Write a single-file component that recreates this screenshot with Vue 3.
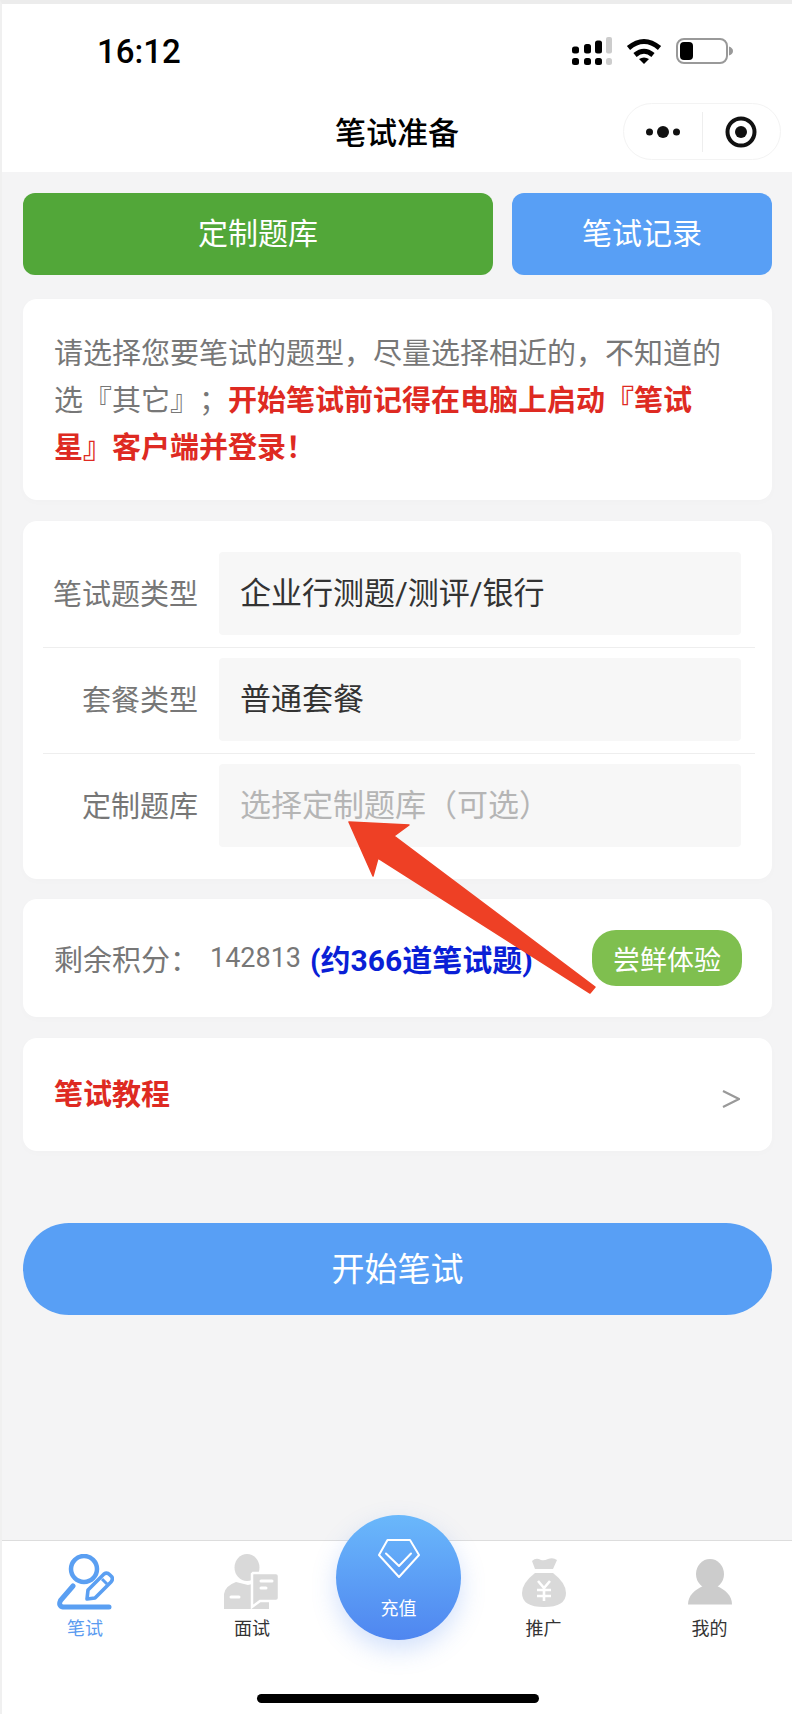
<script setup>
const fields = [
  { label: "笔试题类型", value: "企业行测题/测评/银行" },
  { label: "套餐类型", value: "普通套餐" },
  { label: "定制题库", value: "选择定制题库（可选）", placeholder: true }
];
</script>

<template>
  <div class="page">
    <header class="top">
      <div class="status">
        <span class="time">16:12</span>
        <div class="status-icons">
          <svg width="40" height="28" viewBox="0 0 40 28">
            <rect x="0" y="9.5" width="7" height="7" rx="2.5" fill="#000" />
            <rect x="12" y="7" width="7" height="9.5" rx="2.5" fill="#000" />
            <rect x="23" y="3.5" width="7" height="13" rx="2.5" fill="#000" />
            <rect x="34" y="0" width="6" height="16.5" rx="2" fill="#ccc" />
            <rect x="0" y="21" width="7" height="7" rx="2.5" fill="#000" />
            <rect x="12" y="21" width="7" height="7" rx="2.5" fill="#000" />
            <rect x="23" y="21" width="7" height="7" rx="2.5" fill="#000" />
            <rect x="34" y="21" width="6" height="7" rx="2.5" fill="#ccc" />
          </svg>
          <svg width="36" height="26" viewBox="0 0 36 26">
            <path d="M2.5 10 Q18 -3 33.5 10" fill="none" stroke="#000" stroke-width="5" />
            <path d="M9 17 Q18 9.5 27 17" fill="none" stroke="#000" stroke-width="5" />
            <path d="M13 21 L18 26 L23 21 Q18 18 13 21 Z" fill="#000" />
          </svg>
          <svg width="57" height="26" viewBox="0 0 57 26">
            <rect x="1" y="1" width="50" height="24" rx="7" fill="#fff" stroke="#999" stroke-width="2" />
            <rect x="4" y="4" width="13" height="18" rx="4" fill="#000" />
            <path d="M53 8.5 Q57 10 57 13 Q57 16 53 17.5 Z" fill="#999" />
          </svg>
        </div>
      </div>
      <div class="nav">
        <h1 class="title">笔试准备</h1>
        <div class="capsule">
          <div class="capsule-part">
            <svg width="34" height="14" viewBox="0 0 34 14">
              <circle cx="3.5" cy="7" r="3.5" fill="#111" />
              <circle cx="17" cy="7" r="6" fill="#111" />
              <circle cx="30.5" cy="7" r="3.5" fill="#111" />
            </svg>
          </div>
          <div class="capsule-line"></div>
          <div class="capsule-part">
            <svg width="32" height="32" viewBox="0 0 32 32">
              <circle cx="16" cy="16" r="13.5" fill="none" stroke="#111" stroke-width="4" />
              <circle cx="16" cy="16" r="6" fill="#111" />
            </svg>
          </div>
        </div>
      </div>
    </header>

    <main class="content">
      <div class="top-btns">
        <button class="btn green">定制题库</button>
        <button class="btn blue">笔试记录</button>
      </div>

      <section class="card notice">
        请选择您要笔试的题型，尽量选择相近的，不知道的选『其它』；<b class="red">开始笔试前记得在电脑上启动『笔试星』客户端并登录！</b>
      </section>

      <section class="card form">
        <div v-for="f in fields" :key="f.label" class="row">
          <label class="row-label">{{ f.label }}</label>
          <div class="input" :class="{ placeholder: f.placeholder }">{{ f.value }}</div>
        </div>
      </section>

      <section class="card points">
        <span class="points-label">剩余积分：</span>
        <span class="points-num">142813</span>
        <b class="points-blue">(约366道笔试题)</b>
        <button class="pill">尝鲜体验</button>
      </section>

      <section class="card guide">
        <b class="red guide-text">笔试教程</b>
        <svg width="18" height="18" viewBox="0 0 18 18">
          <path d="M1 1 L17 9 L1 17" fill="none" stroke="#999" stroke-width="2.2" />
        </svg>
      </section>

      <button class="start">开始笔试</button>
    </main>

    <nav class="tabbar">
      <div class="tab active">
        <svg width="57" height="56" viewBox="0 0 57 56">
          <g fill="none" stroke="#5a9ff2">
            <circle cx="27" cy="15" r="13" stroke-width="4.5" />
            <path d="M16 32 L3.5 46.5 Q1 52 6 53 L52 53" stroke-width="5" stroke-linecap="round" stroke-linejoin="round" />
            <path d="M30 45 L31 36 L47 20 Q50 18 53 21 L55 23 Q56 26 54 28 L38 44 Z" stroke-width="3.6" stroke-linejoin="round" />
          </g>
          <path d="M45 25 L50 30" stroke="#5a9ff2" stroke-width="3" />
        </svg>
        <span>笔试</span>
      </div>
      <div class="tab">
        <svg width="56" height="56" viewBox="0 0 56 56">
          <ellipse cx="23" cy="13.5" rx="12.5" ry="13.5" fill="#d9d9d9" />
          <path d="M0 55 L0 40 Q1 32 12 28 L24 31 L36 28 Q44 32 45 40 L45 55 Z" fill="#d9d9d9" />
          <path d="M29 19 L52 19 Q55 19 55 22 L55 44 Q55 47 52 47 L36 47 L28 53 L28 20 Z" fill="#d9d9d9" stroke="#fff" stroke-width="2.5" />
          <path d="M37 27 L48 27 M37 34 L42 34 M7 43 L15 43" stroke="#fff" stroke-width="3" stroke-linecap="round" />
        </svg>
        <span>面试</span>
      </div>
      <div class="recharge">
        <svg width="42" height="40" viewBox="0 0 42 40">
          <path d="M9.5 1 L32 1 L41 16 L21 38 L1 16 Z" fill="none" stroke="#fff" stroke-width="2" stroke-linejoin="round" />
          <path d="M8 14.5 L21 27 L33 14.5" fill="none" stroke="#fff" stroke-width="2" stroke-linecap="round" stroke-linejoin="round" />
        </svg>
        <span>充值</span>
      </div>
      <div class="tab">
        <svg width="56" height="56" viewBox="0 0 56 56">
          <g transform="translate(6 3)">
            <path d="M10 4 Q14 0 19 3 Q22 4 26 2 Q31 0 35 3 L31 12 L13 12 Z" fill="#d9d9d9" />
            <path d="M13 16 L31 16 Q44 26 44 36 Q44 50 22 50 Q0 50 0 36 Q0 26 13 16 Z" fill="#d9d9d9" />
            <path d="M16 24 L22 31 L28 24 M15 33 L29 33 M15 39 L29 39 M22 31 L22 44" fill="none" stroke="#fff" stroke-width="2.6" />
          </g>
        </svg>
        <span>推广</span>
      </div>
      <div class="tab">
        <svg width="56" height="56" viewBox="0 0 56 56">
          <g transform="translate(6 5)">
            <ellipse cx="22" cy="15" rx="14" ry="15" fill="#cccccc" />
            <path d="M0 45.5 C0 36 7 31 15 27 L29 27 C37 31 44 36 44 45.5 Z" fill="#cccccc" />
          </g>
        </svg>
        <span>我的</span>
      </div>
      <div class="home-bar"></div>
    </nav>

    <svg class="arrow" width="260" height="190" viewBox="340 815 260 190">
      <path d="M349 822 L409 825 L394 836 L595 987 L590 993 L378 858 L373 876 Z" fill="#ee4025" stroke="#ee4025" stroke-width="1.5" stroke-linejoin="round" />
    </svg>
  </div>
</template>

<style scoped>
.page {
  position: relative;
  box-sizing: border-box;
  width: 792px;
  height: 1714px;
  display: flex;
  flex-direction: column;
  overflow: hidden;
  border-top: 4px solid #ececec;
  border-left: 2px solid #f0f0f0;
  background: #f4f4f5;
  font-family: Roboto, "Noto Sans CJK SC", sans-serif;
  color: #777;
  text-spacing-trim: space-all;
}

.top {
  background: #fff;
}

.status {
  box-sizing: border-box;
  height: 84px;
  padding: 9px 59px 0 95px;
  display: flex;
  align-items: center;
  justify-content: space-between;
}

.time {
  font-size: 33px;
  font-weight: 500;
  color: #000;
  position: relative;
  top: 1px;
}

.status-icons {
  display: flex;
  align-items: center;
  gap: 14px;
}

.nav {
  position: relative;
  height: 84px;
  display: flex;
  align-items: center;
  justify-content: center;
}

.title {
  margin: 0;
  font-size: 31px;
  font-weight: 500;
  color: #000;
}

.capsule {
  position: absolute;
  right: 11px;
  top: 15px;
  box-sizing: border-box;
  width: 158px;
  height: 57px;
  display: flex;
  align-items: center;
  background: #fff;
  border: 1px solid #f3f3f3;
  border-radius: 29px;
}

.capsule-part {
  flex: 1;
  display: flex;
  justify-content: center;
}

.capsule-line {
  width: 1px;
  height: 40px;
  background: #eee;
}

.content {
  flex: 1;
  padding: 21px 20px 0 21px;
}

.top-btns {
  display: flex;
  gap: 19px;
}

.btn {
  height: 82px;
  padding: 0 0 7px;
  border: none;
  border-radius: 12px;
  font-family: inherit;
  font-size: 30px;
  color: #fff;
}

.green {
  width: 470px;
  background: #52a739;
}

.blue {
  flex: 1;
  background: #589ff5;
}

.card {
  background: #fff;
  border-radius: 14px;
  box-shadow: 0 2px 8px rgba(0, 0, 0, 0.015);
}

.notice {
  box-sizing: border-box;
  height: 201px;
  margin-top: 24px;
  padding: 32px 32px 0 31px;
  font-size: 29px;
  line-height: 47px;
}

.red {
  color: #de2a22;
  font-weight: 700;
}

.form {
  box-sizing: border-box;
  height: 358px;
  margin-top: 21px;
  padding: 31px 17px 0 20px;
}

.row {
  height: 95px;
  display: flex;
  gap: 21px;
  margin-bottom: 11px;
  position: relative;
}

.row:not(:last-child)::after {
  content: "";
  position: absolute;
  left: 0;
  right: 0;
  bottom: -1px;
  height: 1px;
  background: #eeeeee;
}

.row-label {
  width: 155px;
  height: 83px;
  line-height: 86px;
  text-align: right;
  font-size: 29px;
  flex-shrink: 0;
}

.input {
  width: 522px;
  height: 83px;
  line-height: 83px;
  padding-left: 21px;
  box-sizing: border-box;
  background: #f7f7f7;
  border-radius: 4px;
  font-size: 31px;
  color: #333;
}

.input.placeholder {
  color: #b5b5b5;
}

.points {
  box-sizing: border-box;
  height: 118px;
  margin-top: 20px;
  padding: 0 30px 0 31px;
  display: flex;
  align-items: center;
}

.points-label {
  width: 156px;
  font-size: 29px;
}

.points-num {
  font-size: 27px;
  color: #777;
}

.points-blue {
  margin-left: 9px;
  font-size: 30px;
  font-weight: 700;
  color: #0a1fd6;
  white-space: nowrap;
}

.pill {
  margin-left: auto;
  width: 150px;
  height: 56px;
  padding: 0;
  border: none;
  border-radius: 24px;
  background: #7fbf4f;
  font-family: inherit;
  font-size: 27px;
  color: #fff;
}

.guide {
  box-sizing: border-box;
  height: 113px;
  margin-top: 21px;
  padding: 0 32px 0 31px;
  display: flex;
  align-items: center;
  justify-content: space-between;
  font-size: 29px;
}

.guide-text {
  position: relative;
  top: -3px;
}

.guide svg {
  margin-top: 8px;
}

.start {
  display: block;
  width: 100%;
  height: 92px;
  margin-top: 72px;
  padding: 0 0 4px;
  border: none;
  border-radius: 46px;
  background: #589ff5;
  font-family: inherit;
  font-size: 33px;
  color: #fff;
}

.tabbar {
  position: relative;
  box-sizing: border-box;
  height: 174px;
  display: grid;
  grid-template-columns: 166px 168px 124px 167px 1fr;
  align-items: start;
  padding-top: 13px;
  background: #fff;
  border-top: 1px solid #dddddd;
}

.tab {
  display: flex;
  flex-direction: column;
  align-items: center;
  font-size: 18px;
  line-height: 24px;
  color: #333;
}

.tab svg {
  display: block;
  margin-bottom: 7px;
}

.tab.active {
  color: #5b9bf0;
}

.recharge {
  box-sizing: border-box;
  width: 125px;
  height: 125px;
  margin-top: -39px;
  padding-top: 24px;
  display: flex;
  flex-direction: column;
  align-items: center;
  gap: 18px;
  border-radius: 50%;
  background: linear-gradient(#6ab8fb, #4f86f0);
  box-shadow: 0 10px 24px rgba(79, 134, 240, 0.25);
  font-size: 18px;
  line-height: 24px;
  color: #fff;
}

.home-bar {
  position: absolute;
  left: 255px;
  bottom: 11px;
  width: 282px;
  height: 9px;
  border-radius: 5px;
  background: #000;
}

.arrow {
  position: absolute;
  left: 338px;
  top: 811px;
}

button {
  cursor: pointer;
}
</style>
